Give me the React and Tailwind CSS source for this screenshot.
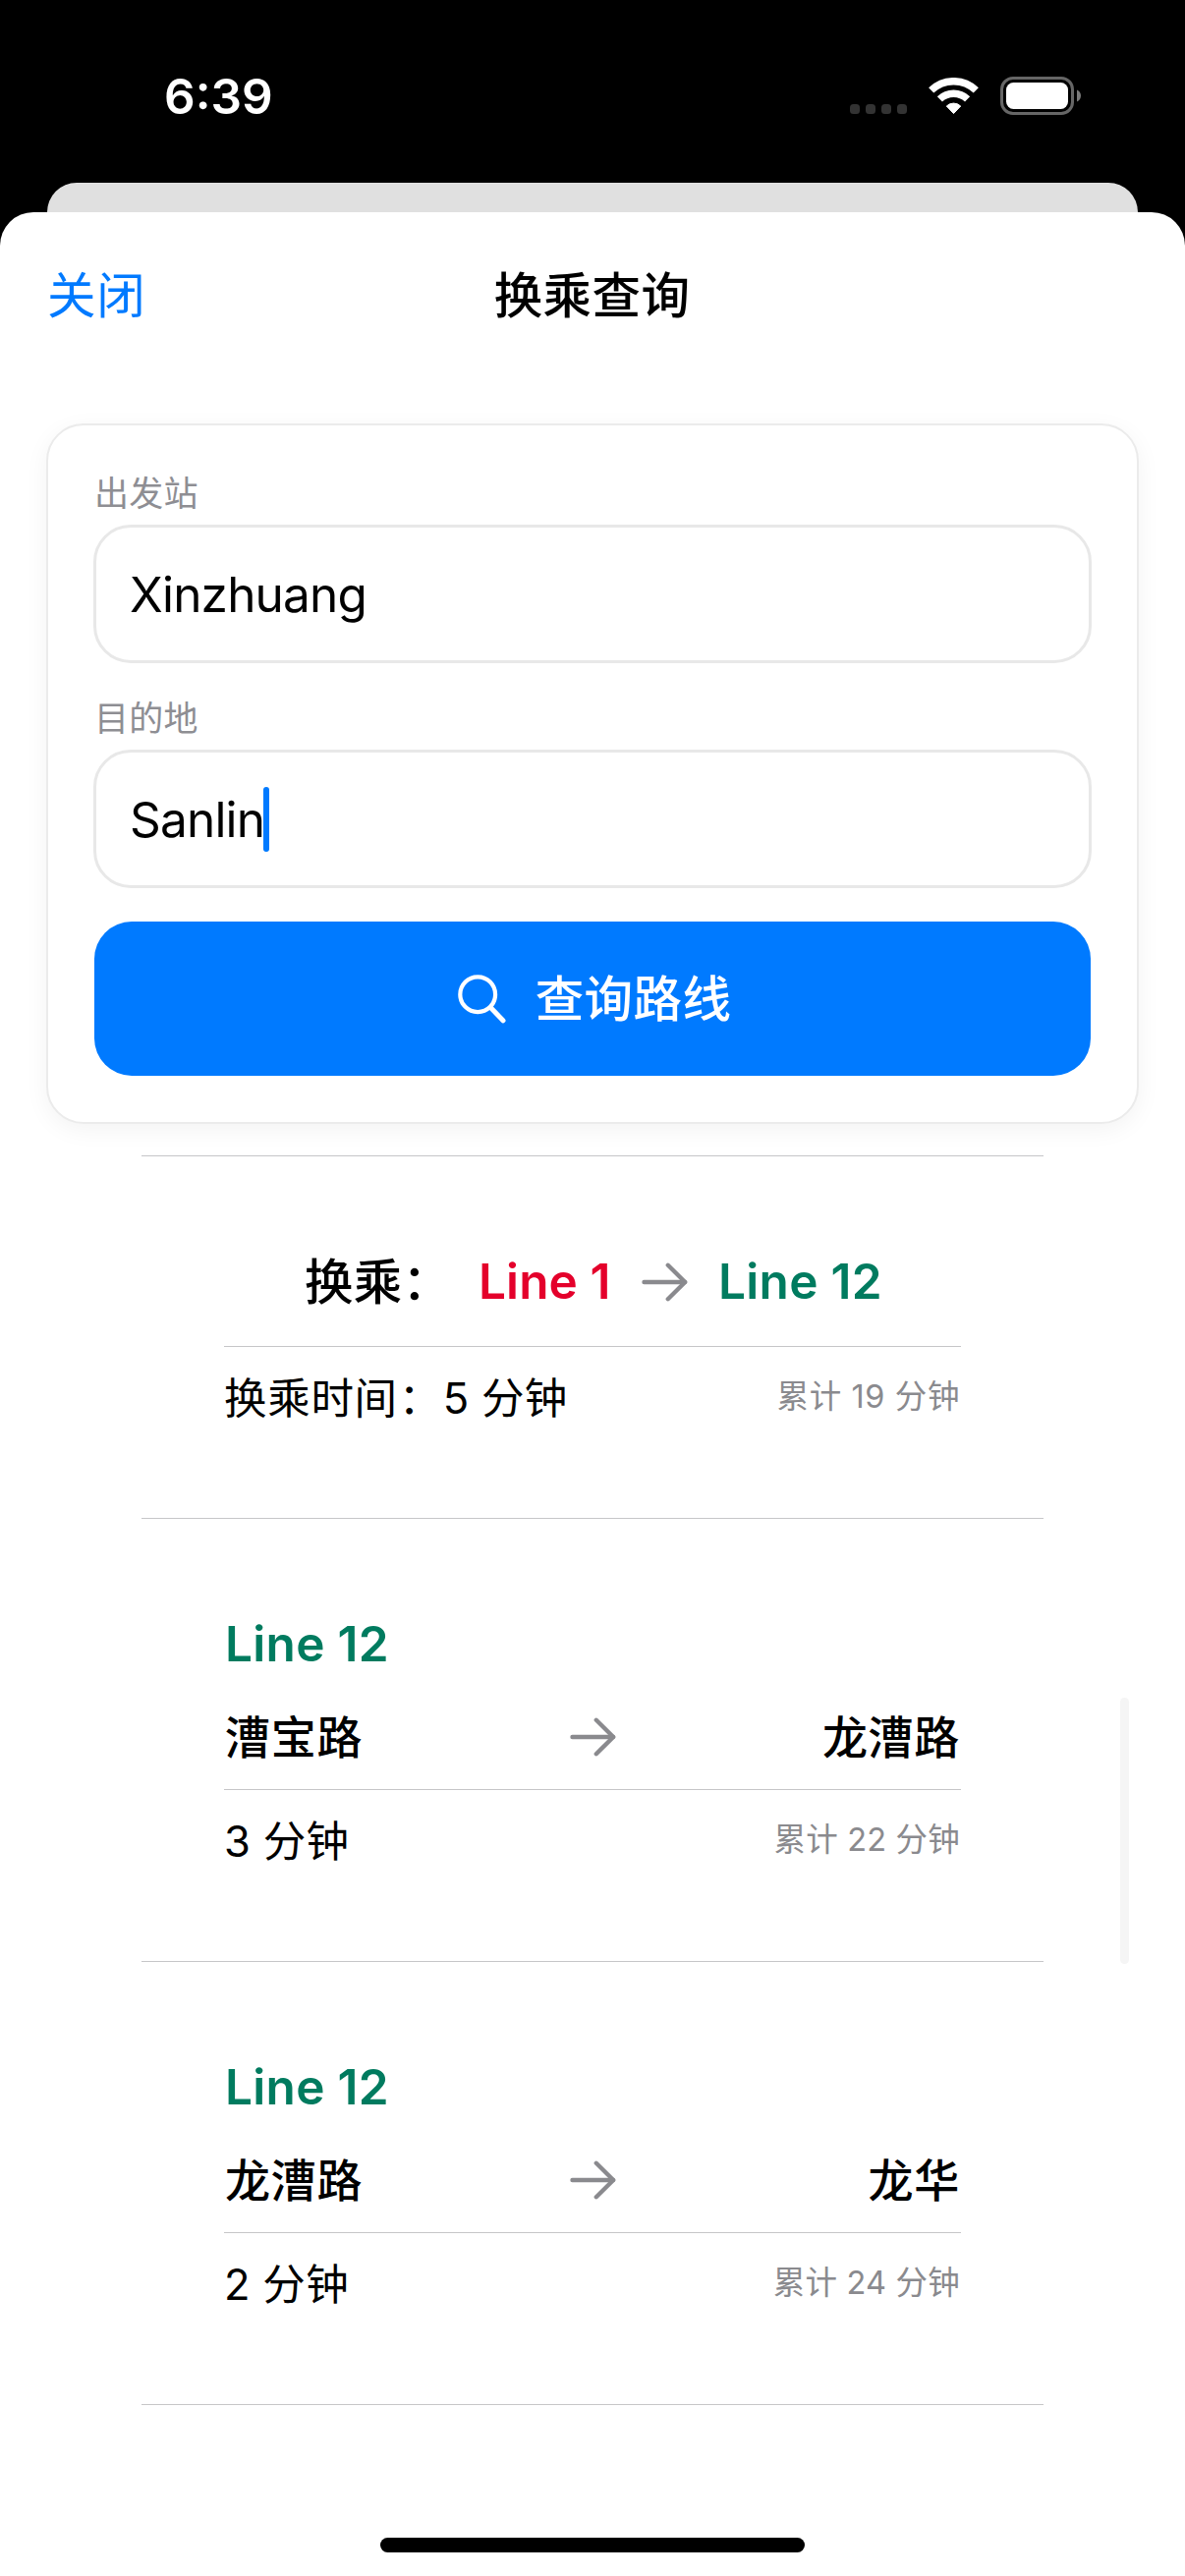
import React from "react";

const segments = [
  { line: "Line 12", from: "漕宝路", to: "龙漕路", time: "3 分钟", total: "累计 22 分钟" },
  { line: "Line 12", from: "龙漕路", to: "龙华", time: "2 分钟", total: "累计 24 分钟" },
];

function WifiIcon() {
  return (
    <svg width="51" height="38" viewBox="0 0 51 38" fill="none">
      <path d="M2.7 12.9A32.8 32.8 0 0 1 48.3 12.9" stroke="#fff" strokeWidth="7.4" />
      <path d="M11.4 21.9A20.3 20.3 0 0 1 39.6 21.9" stroke="#fff" strokeWidth="7.4" />
      <path d="M18.3 29A10.3 10.3 0 0 1 32.7 29L25.5 36.6Z" fill="#fff" stroke="#fff" strokeWidth="1" strokeLinejoin="round" />
    </svg>
  );
}

function BatteryIcon() {
  return (
    <svg width="83" height="39" viewBox="0 0 83 39" fill="none">
      <rect x="1.5" y="1.5" width="72" height="36" rx="11.5" stroke="#666" strokeWidth="3" />
      <rect x="6" y="6" width="63" height="27" rx="7.5" fill="#fff" />
      <path d="M78 13.5C80.4 14.4 82 16.7 82 19.5S80.4 24.6 78 25.5Z" fill="#7a7a7a" />
    </svg>
  );
}

function ArrowIcon() {
  return (
    <svg width="47" height="40" viewBox="0 0 47 40" fill="none" stroke="#8a8a8e" strokeWidth="4.4" strokeLinecap="round" strokeLinejoin="round" className="shrink-0">
      <path d="M2.5 20H44" />
      <path d="M26.8 2.8L44.2 20L26.8 37.2" />
    </svg>
  );
}

function SearchIcon() {
  return (
    <svg width="49" height="50" viewBox="0 0 49 50" fill="none" stroke="#fff" strokeLinecap="round">
      <circle cx="20.2" cy="20.2" r="17.9" strokeWidth="4.2" />
      <path d="M33.5 33.8L46 46.8" strokeWidth="5" />
    </svg>
  );
}

function StatusBar() {
  return (
    <div className="flex h-[186px] items-start justify-between pl-[167px] pr-[105px] pt-[68px]">
      <span className="text-[49.5px] leading-[61px] font-semibold text-white">6:39</span>
      <div className="flex pt-[10px]">
        <div className="mt-[28px] flex gap-[6px]">
          <i className="h-[10px] w-[10px] rounded-[3.5px] bg-[#333]" />
          <i className="h-[10px] w-[10px] rounded-[3.5px] bg-[#333]" />
          <i className="h-[10px] w-[10px] rounded-[3.5px] bg-[#333]" />
          <i className="h-[10px] w-[10px] rounded-[3.5px] bg-[#333]" />
        </div>
        <div className="mt-px ml-[22px]"><WifiIcon /></div>
        <div className="ml-[22px]"><BatteryIcon /></div>
      </div>
    </div>
  );
}

function Field({ label, value, focused }) {
  return (
    <div>
      <div className="mb-[10px] pt-px text-[35px] leading-[43px] tracking-[0.2px] text-[#8e8e93]">{label}</div>
      <div className="-mx-px flex h-[141px] items-center rounded-[38px] border-[3px] border-[#e8e8e8] bg-white pl-[34px]">
        <span className="pt-px text-[49.5px] leading-[61px] tracking-[-0.8px]">{value}</span>
        {focused && <i className="-ml-px h-[66px] w-[6px] rounded-full bg-[#007aff]" />}
      </div>
    </div>
  );
}

function TimeRow({ prefix, time, total, tight }) {
  return (
    <>
      <div className="h-px bg-[#c6c6c8]" />
      <div className="mt-6 mb-24 flex h-[54px] items-center justify-between">
        <div className="flex pt-px text-[43.5px] leading-[54px] tracking-[0.3px]">
          {prefix && (
            <>
              <span className="tracking-[0.7px]">{prefix}</span>
              <span className="mr-px ml-px">：</span>
            </>
          )}
          <span>{time}</span>
        </div>
        <span className={tight ? "mr-px pt-px text-[32.5px] tracking-[0.2px] text-[#8a8a8e]" : "mr-px pt-px text-[32.5px] tracking-[0.6px] text-[#8a8a8e]"}>{total}</span>
      </div>
    </>
  );
}

function Transfer() {
  return (
    <div className="border-b border-[#c6c6c8] px-[84px] pt-[97px]">
      <div className="mb-[35px] flex h-[61px] items-center pl-[82px] text-[49.5px] font-semibold tracking-[0.3px]">
        <span className="w-[177px] pt-px font-medium">换乘：</span>
        <span className="w-[166px] tracking-[0.1px] text-[#e4002b]">Line 1</span>
        <ArrowIcon />
        <span className="ml-[31px] text-[#007b5f]">Line 12</span>
      </div>
      <TimeRow prefix="换乘时间" time="5 分钟" total="累计 19 分钟" />
    </div>
  );
}

function Segment({ line, from, to, time, total }) {
  return (
    <div className="border-b border-[#c6c6c8] px-[84px] pt-[97px]">
      <div className="pl-px text-[49.5px] leading-[61px] font-semibold tracking-[0.3px] text-[#007b5f]">{line}</div>
      <div className="mt-[35px] mb-6 grid h-[58px] grid-cols-[1fr_auto_1fr] items-center text-[46px] leading-[58px] font-medium tracking-[0.7px]">
        <span className="pl-px">{from}</span>
        <ArrowIcon />
        <span className="pr-px text-right">{to}</span>
      </div>
      <TimeRow time={time} total={total} tight />
    </div>
  );
}

export default function App() {
  return (
    <div className="relative h-[2622px] w-[1206px] overflow-hidden bg-black font-['Inter','Noto_Sans_CJK_SC',sans-serif] text-black">
      <StatusBar />
      <div className="mx-12 h-[30px] rounded-t-[30px] bg-[#e0e0e0]" />
      <div className="flex h-[2406px] flex-col rounded-t-[34px] bg-white">
        <header className="grid h-[171px] grid-cols-[1fr_auto_1fr] items-center px-12 text-[49.5px]">
          <span className="tracking-[0.8px] text-[#007aff]">关闭</span>
          <span className="pr-px font-medium tracking-[0.4px]">换乘查询</span>
        </header>
        <section className="mx-[47px] mt-[44px] h-[713px] rounded-[38px] border-2 border-[#ebebeb] bg-white px-[47px] pt-[47px] shadow-[0_6px_24px_rgba(0,0,0,0.05)]">
          <Field label="出发站" value="Xinzhuang" />
          <div className="h-[34px]" />
          <Field label="目的地" value="Sanlin" focused />
          <button className="mt-[34px] flex h-[157px] w-full items-center justify-center gap-[30px] rounded-[38px] bg-[#007aff] pl-[4px] text-[49.5px] font-medium tracking-[0.4px] text-white">
            <SearchIcon />
            <span className="pt-[2px]">查询路线</span>
          </button>
        </section>
        <main className="mx-36 mt-8 border-t border-[#c6c6c8]">
          <Transfer />
          {segments.map((s) => (
            <Segment key={s.from} {...s} />
          ))}
        </main>
        <div className="mx-auto mt-auto mb-6 h-[15px] w-[432px] rounded-full bg-black" />
      </div>
      <div className="absolute top-[1728px] left-[1140px] h-[271px] w-[9px] rounded-full bg-[#f5f5f5]" />
    </div>
  );
}
